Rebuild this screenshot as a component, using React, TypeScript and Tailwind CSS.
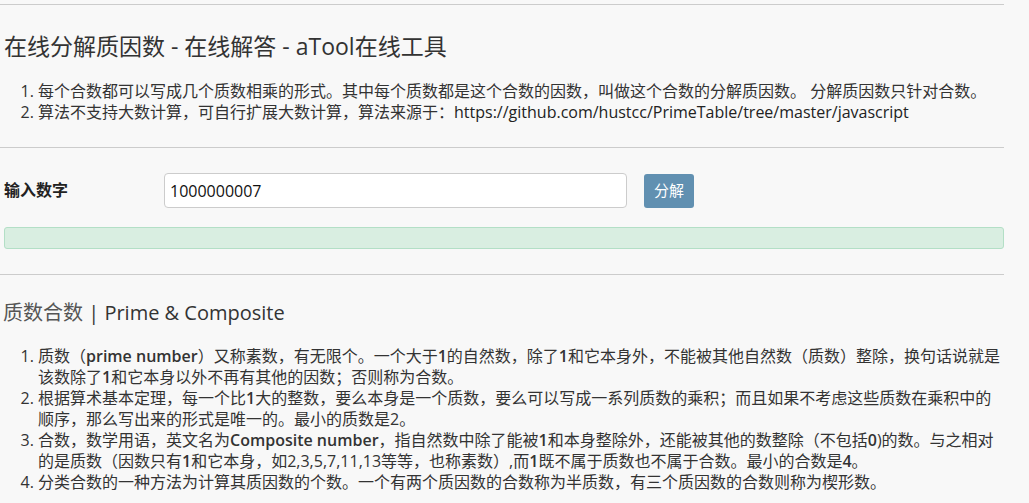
import React from "react";

const B = ({ children }: { children: React.ReactNode }) => (
  <span className="font-semibold">{children}</span>
);

export default function App() {
  return (
    <div className="min-h-screen bg-[#f8f8f8] font-['Open_Sans','Noto_Sans_CJK_SC',sans-serif] text-[#333]">
      <div className="w-[1004px] pt-[4px]">
        <div className="h-px bg-[#cccccc]" />

        <h1 className="mt-[27px] pl-[4px] text-[23px] font-normal leading-[28px] text-[#333]">
          在线分解质因数 - 在线解答 - aTool在线工具
        </h1>

        <ol className="mt-[21px] list-decimal pl-[38px] text-[16px] leading-[21px] whitespace-nowrap">
          <li>每个合数都可以写成几个质数相乘的形式。其中每个质数都是这个合数的因数，叫做这个合数的分解质因数。 分解质因数只针对合数。</li>
          <li>
            算法不支持大数计算，可自行扩展大数计算，算法来源于：
            <span className="text-[#222]">https://github.com/hustcc/PrimeTable/tree/master/javascript</span>
          </li>
        </ol>

        <div className="mt-[24px] h-px bg-[#cccccc]" />

        <div className="mt-[25px] flex items-center pl-[4px]">
          <label className="w-[160px] text-[16px] font-bold leading-[21px] text-[#222]">输入数字</label>
          <input
            readOnly
            value="1000000007"
            className="h-[35px] w-[463px] rounded-[4px] border border-[#cccccc] bg-white px-[5px] text-[16px] text-[#111] outline-none"
          />
          <button className="ml-[17px] h-[34px] w-[50px] rounded-[3px] bg-[#6190b1] text-[15px] text-white">
            分解
          </button>
        </div>

        <div className="mt-[19px] ml-[4px] h-[22px] rounded-[3px] border border-[#b3dfc6] bg-[#d9eee1]" />

        <div className="mt-[25px] h-px bg-[#cccccc]" />

        <h2 className="mt-[24px] pl-[3px] text-[20px] font-normal leading-[28px]">
          <span className="text-[#555]">质数合数</span>
          <span className="text-[#333]"> | Prime &amp; Composite</span>
        </h2>

        <ol className="mt-[19px] list-decimal pl-[38px] text-[16px] leading-[21px] whitespace-nowrap">
          <li>
            质数（<B>prime number</B>）又称素数，有无限个。一个大于<B>1</B>的自然数，除了<B>1</B>和它本身外，不能被其他自然数（质数）整除，换句话说就是
            <br />
            该数除了<B>1</B>和它本身以外不再有其他的因数；否则称为合数。
          </li>
          <li>
            根据算术基本定理，每一个比<B>1</B>大的整数，要么本身是一个质数，要么可以写成一系列质数的乘积；而且如果不考虑这些质数在乘积中的
            <br />
            顺序，那么写出来的形式是唯一的。最小的质数是2。
          </li>
          <li>
            合数，数学用语，英文名为<B>Composite number</B>，指自然数中除了能被<B>1</B>和本身整除外，还能被其他的数整除（不包括<B>0</B>)的数。与之相对
            <br />
            的是质数（因数只有<B>1</B>和它本身，如2,3,5,7,11,13等等，也称素数）,而<B>1</B>既不属于质数也不属于合数。最小的合数是<B>4</B>。
          </li>
          <li>分类合数的一种方法为计算其质因数的个数。一个有两个质因数的合数称为半质数，有三个质因数的合数则称为楔形数。</li>
        </ol>
      </div>
    </div>
  );
}
